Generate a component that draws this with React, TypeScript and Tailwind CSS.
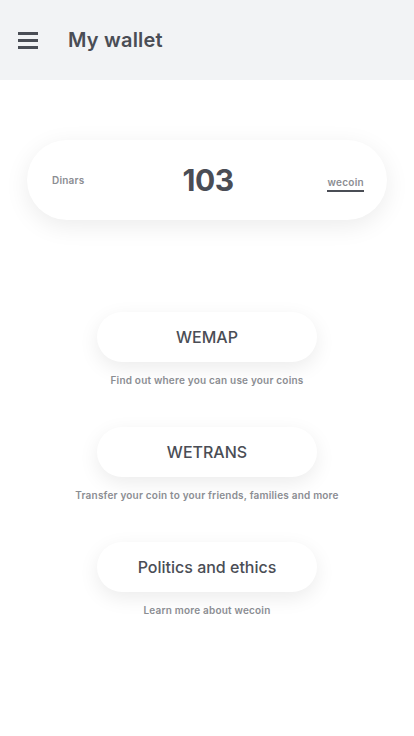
const links = [
  { label: "WEMAP", caption: "Find out where you can use your coins" },
  { label: "WETRANS", caption: "Transfer your coin to your friends, families and more" },
  { label: "Politics and ethics", caption: "Learn more about wecoin" },
];

export default function App() {
  return (
    <div className="min-h-[736px] w-[414px] bg-white font-['Inter',sans-serif] text-[#4a4d55]">
      {/* Header */}
      <header className="flex h-20 items-center bg-[#f2f3f5] px-[18px]">
        <button className="flex w-5 flex-col gap-[4px]" aria-label="Menu">
          <span className="h-[3px] w-5 bg-[#4a4d55]" />
          <span className="h-[3px] w-5 bg-[#4a4d55]" />
          <span className="h-[3px] w-5 bg-[#4a4d55]" />
        </button>
        <h1 className="ml-[30px] text-[20px] font-semibold tracking-[0.2px]">My wallet</h1>
      </header>

      {/* Balance */}
      <div className="px-[27px] pt-[60px]">
        <div className="flex h-20 items-center justify-between rounded-full bg-white pl-[25px] pr-[23px] shadow-[0_6px_24px_rgba(0,0,0,0.08)]">
          <span className="w-12 text-[10px] font-semibold tracking-[0.2px] text-[#8b8d92]">Dinars</span>
          <span className="text-[30px] font-bold tracking-[-0.5px]">103</span>
          <span className="w-12 text-right">
            <span className="border-b-2 border-[#4a4d55] pb-[2px] text-[10px] font-semibold tracking-[0.3px] text-[#8b8d92]">wecoin</span>
          </span>
        </div>
      </div>

      {/* Links */}
      <div className="flex flex-col items-center gap-[41px] pt-[92px]">
        {links.map((l) => (
          <div key={l.label} className="flex flex-col items-center">
            <button className="h-[50px] w-[220px] rounded-full bg-white text-[16px] font-medium shadow-[0_6px_20px_rgba(0,0,0,0.08)]">
              {l.label}
            </button>
            <p className="mt-[12px] text-[10px] font-semibold leading-3 tracking-[0.2px] text-[#8b8d92]">{l.caption}</p>
          </div>
        ))}
      </div>
    </div>
  );
}
